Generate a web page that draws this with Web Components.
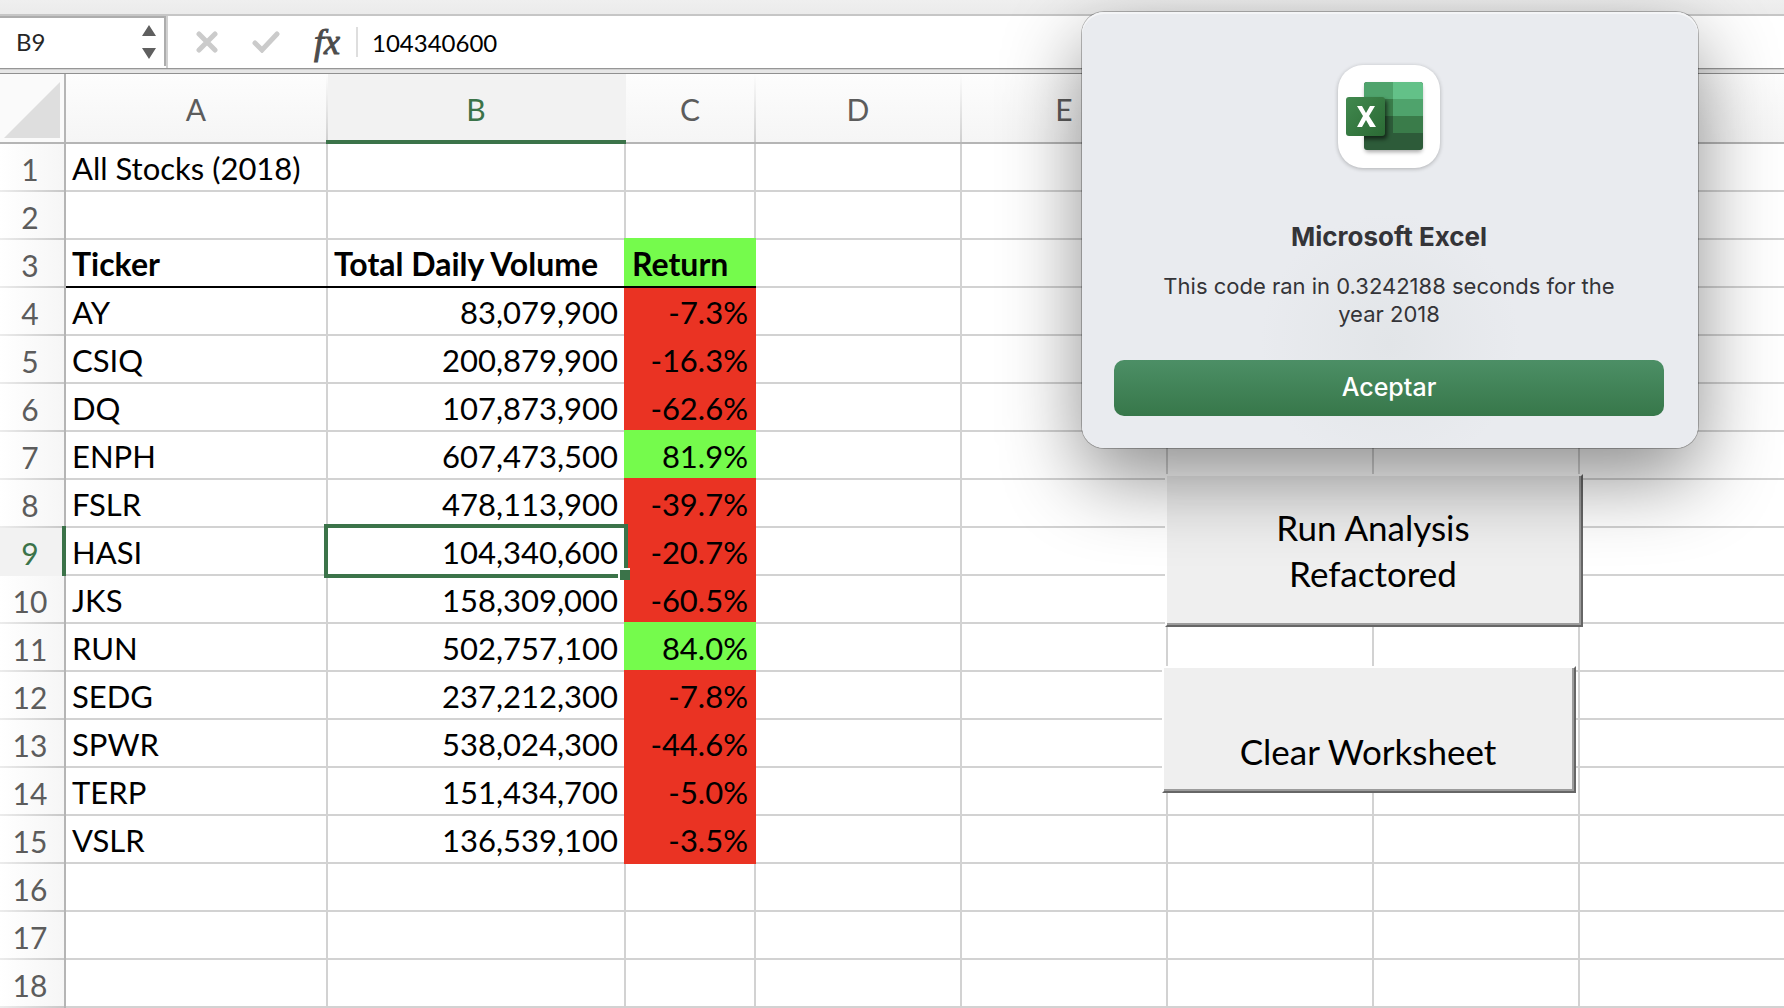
<!DOCTYPE html>
<html lang="es">
<head>
<meta charset="utf-8">
<title>Microsoft Excel</title>
<style>
  body {
    margin: 0;
    background: #fff;
    font-family: Lato, "Liberation Sans", sans-serif;
    overflow: hidden;
  }
</style>
</head>
<body>
<excel-window>
  <formula-bar slot="bar" cell="B9" formula="104340600"></formula-bar>
  <sheet-grid slot="sheet">
    <sheet-button class="run">Run Analysis<br>Refactored</sheet-button>
    <sheet-button class="clear" low>Clear Worksheet</sheet-button>
  </sheet-grid>
  <alert-dialog slot="dialog" action="Aceptar">
    <excel-icon slot="icon"></excel-icon>
    <span slot="title">Microsoft Excel</span>
    <span slot="message">This code ran in 0.3242188 seconds for the year 2018</span>
  </alert-dialog>
</excel-window>

<script>
const define = (name, html, setup) => {
  const template = document.createElement('template');
  template.innerHTML = html;
  customElements.define(name, class extends HTMLElement {
    connectedCallback() {
      if (this.shadowRoot) return;
      const root = this.attachShadow({ mode: 'open' });
      root.append(template.content.cloneNode(true));
      if (setup) setup(this, root);
    }
  });
};

/* Window frame: ribbon edge, formula bar, worksheet, and the modal above them */
define('excel-window', `
<style>
  :host { display: flex; flex-direction: column; position: relative; height: 100vh; overflow: hidden; }
  .ribbon { height: 14px; flex: none; background: linear-gradient(#efefef, #ebebeb); border-bottom: 2px solid #c6c6c6; }
  ::slotted([slot=sheet]) { flex: 1; }
  ::slotted([slot=dialog]) { position: absolute; top: 12px; right: 86px; z-index: 10; }
</style>
<div class="ribbon"></div>
<slot name="bar"></slot>
<slot name="sheet"></slot>
<slot name="dialog"></slot>
`);

define('formula-bar', `
<style>
  :host { display: block; flex: none; background: #fff; }
  .bar { display: flex; align-items: center; height: 52px; }
  .name { display: flex; align-items: center; box-sizing: border-box; width: 166px; height: 50px; align-self: flex-start;
    padding: 0 8px 0 16px; border-top: 2px solid #adadad; border-right: 2px solid #adadad; background: #fff; }
  .edge { width: 2px; align-self: stretch; background: #d0d0d0; }
  input { font: 24px/30px Lato, sans-serif; border: 0; padding: 0; margin: 0; background: none; outline: 0; min-width: 0; flex: 1; color: #000; }
  .name input { color: #262626; }
  .formula { padding-top: 2px; }
  button { border: 0; padding: 0; margin: 0; background: none; display: block; flex: none; }
  svg { display: block; }
  .cancel { margin-left: 28px; }
  .enter { margin-left: 34px; }
  .fx { margin-left: 32px; color: #4c4c4c; font: italic 400 36px/38px "Liberation Serif", serif; -webkit-text-stroke: 1px #4c4c4c; width: 30px; height: 38px; }
  .rule { width: 2px; height: 30px; margin: 0 14px; background: #dedede; }
  .split { height: 4px; border-top: 1px solid #969696; border-bottom: 1px solid #909090; background: #e6e6e6; box-shadow: inset 0 1px #d0d0d0; }
</style>
<div class="bar">
  <div class="name">
    <input class="ref" aria-label="Name box">
    <button aria-label="Step cell">
      <svg width="14" height="34" viewBox="0 0 14 34" fill="#5f5f5f"><path d="M7 0l7 11H0zM0 23h14l-7 11z"/></svg>
    </button>
  </div>
  <div class="edge"></div>
  <button class="cancel" aria-label="Cancel">
    <svg width="22" height="22" viewBox="0 0 22 22" stroke="#cbcbcb" stroke-width="5" stroke-linecap="round"><path d="M3 3l16 16M19 3L3 19"/></svg>
  </button>
  <button class="enter" aria-label="Enter">
    <svg width="28" height="22" viewBox="0 0 28 22" fill="none" stroke="#cbcbcb" stroke-width="5" stroke-linecap="round"><path d="M3 12l7 7L25 3"/></svg>
  </button>
  <button class="fx" aria-label="Insert function">fx</button>
  <div class="rule"></div>
  <input class="formula" aria-label="Formula">
</div>
<div class="split"></div>
`, (host, root) => {
  root.querySelector('.ref').value = host.getAttribute('cell');
  root.querySelector('.formula').value = host.getAttribute('formula');
});

define('sheet-grid', `
<style>
  :host { display: block; position: relative; overflow: hidden; background: #fff; }
  table { width: 100%; table-layout: fixed; border-collapse: separate; border-spacing: 0; font-size: 31px; line-height: 36px; color: #000; }
  col.h { width: 66px; } col.a { width: 262px; } col.b { width: 298px; } col.c { width: 130px; } col.n { width: 206px; }
  th, td { box-sizing: border-box; white-space: nowrap; }
  thead th { height: 70px; padding: 2px 2px 0 0; font-size: 30px; font-weight: 400; color: #5c5c5c; border-bottom: 2px solid #b5b5b5;
    background: linear-gradient(#fdfdfd, #cfcfcf) right / 2px 100% no-repeat, linear-gradient(#fdfdfd, #f5f5f5); }
  thead th:first-child { padding: 0 4px 4px; vertical-align: bottom; background: #fafafa; border-right: 2px solid #b5b5b5; }
  thead th:last-child { background: linear-gradient(#fdfdfd, #f5f5f5); }
  thead svg { display: block; }
  .on { position: relative; }
  .on::after { content: ""; position: absolute; background: #3b7349; }
  thead th.on { color: #3b7349; background: #f2f2f2; }
  thead .on::after { left: -2px; right: 0; bottom: -2px; height: 4px; }
  tbody th { height: 48px; padding: 1px 4px 0 0; font-size: 30px; font-weight: 400; color: #5c5c5c; border-right: 2px solid #b5b5b5;
    background: linear-gradient(to right, #ececec, #c8c8c8) bottom / 100% 2px no-repeat, linear-gradient(to right, #fff, #f6f6f6); }
  tbody th.on { color: #3b7349; background: #f2f2f2; }
  tbody .on::after { top: -2px; bottom: 0; right: -2px; width: 4px; }
  td { height: 48px; padding: 2px 6px 0; border-right: 2px solid #d2d2d2; border-bottom: 2px solid #d2d2d2; }
  th:last-child, td:last-child { border-right: 0; }
  .num { text-align: right; }
  .head td { font-weight: 700; font-size: 32px; }
  .head td:nth-child(-n+4) { position: relative; }
  .head td:nth-child(-n+4)::after { content: ""; position: absolute; left: 0; right: -2px; bottom: -2px; height: 2px; background: #000; }
  .up, .down { position: relative; border-color: var(--fill); background: var(--fill);
    box-shadow: -2px 0 var(--fill), 0 -2px var(--fill), -2px -2px var(--fill); }
  .up { --fill: #75fb4c; }
  .down { --fill: #ea3323; }
  .head .up { box-shadow: -2px -2px var(--fill), 0 -2px var(--fill); }
  .first .down { box-shadow: -2px 0 var(--fill); }
  .sel { position: relative; z-index: 1; }
  .sel::before { content: ""; position: absolute; inset: -4px; border: 4px solid #3b7349; }
  .sel::after { content: ""; position: absolute; right: -6px; bottom: -6px; width: 10px; height: 10px; background: #3b7349; border: solid #fff; border-width: 2px 0 0 2px; }
  ::slotted(sheet-button) { position: absolute; z-index: 2; }
  ::slotted(.run) { left: 1165px; top: 400px; width: 418px; height: 153px; }
  ::slotted(.clear) { left: 1162px; top: 592px; width: 414px; height: 127px; }
</style>
<table>
  <colgroup><col class="h"><col class="a"><col class="b"><col class="c"><col class="n"><col class="n"><col class="n"><col class="n"><col></colgroup>
  <thead><tr>
    <th><svg width="56" height="56" viewBox="0 0 56 56"><path d="M56 0v56H0z" fill="#dedede"/></svg></th>
    <th>A</th><th class="on">B</th><th>C</th><th>D</th><th>E</th><th>F</th><th>G</th><th>H</th>
  </tr></thead>
  <tbody></tbody>
</table>
<slot></slot>
`, (host, root) => {
  const rows = {
    1: ['All Stocks (2018)'],
    3: ['Ticker', 'Total Daily Volume', 'Return'],
    4: ['AY', '83,079,900', '-7.3%'],
    5: ['CSIQ', '200,879,900', '-16.3%'],
    6: ['DQ', '107,873,900', '-62.6%'],
    7: ['ENPH', '607,473,500', '81.9%'],
    8: ['FSLR', '478,113,900', '-39.7%'],
    9: ['HASI', '104,340,600', '-20.7%'],
    10: ['JKS', '158,309,000', '-60.5%'],
    11: ['RUN', '502,757,100', '84.0%'],
    12: ['SEDG', '237,212,300', '-7.8%'],
    13: ['SPWR', '538,024,300', '-44.6%'],
    14: ['TERP', '151,434,700', '-5.0%'],
    15: ['VSLR', '136,539,100', '-3.5%']
  };
  const body = root.querySelector('tbody');
  for (let r = 1; r <= 18; r++) {
    const tr = body.insertRow();
    if (r === 3) tr.className = 'head';
    if (r === 4) tr.className = 'first';
    const th = document.createElement('th');
    th.scope = 'row';
    th.textContent = r;
    if (r === 9) th.className = 'on';
    tr.append(th);
    for (let c = 0; c < 8; c++) {
      const td = tr.insertCell();
      const text = (rows[r] || [])[c];
      if (text === undefined) continue;
      td.textContent = text;
      if (r > 3 && c > 0) td.classList.add('num');
      if (c === 2) td.classList.add(text[0] === '-' ? 'down' : 'up');
      if (r === 9 && c === 1) td.classList.add('sel');
    }
  }
});

/* Bevelled form control placed on the worksheet */
define('sheet-button', `
<style>
  :host { display: block; }
  button { width: 100%; height: 100%; box-sizing: border-box; margin: 0; padding: 0 2px 2px 0; border: 2px solid; border-color: #fff #666 #666 #fff;
    background: #efefef; box-shadow: inset -2px -2px #9c9c9c; font: 35px/46px Lato, sans-serif; color: #000; }
  :host([low]) button { padding-top: 44px; }
</style>
<button><slot></slot></button>
`);

define('alert-dialog', `
<style>
  :host { display: flex; flex-direction: column; align-items: center; box-sizing: border-box; width: 616px; padding: 53px 34px 32px 32px;
    border-radius: 22px; background: radial-gradient(circle at 50% 76%, #e2e5e8, #e9ebef 130px); color: #343438; font-family: Inter, sans-serif; text-align: center;
    box-shadow: inset 0 2px #f4f5f7, 0 0 0 1px rgba(0,0,0,.25), 0 30px 80px rgba(0,0,0,.45); }
  h1 { margin: 52px 0 0; font-size: 26px; line-height: 32px; font-weight: 700; }
  p { margin: 19px 0 0; width: 480px; font-size: 22px; line-height: 28px; }
  button { align-self: stretch; height: 56px; margin: 32px 0 0; padding: 0 0 2px; border: 0; border-radius: 10px; color: #fff;
    background: linear-gradient(#4c8f66, #37774a); font: 500 25px/32px Inter, sans-serif; }
</style>
<slot name="icon"></slot>
<h1><slot name="title"></slot></h1>
<p><slot name="message"></slot></p>
<button></button>
`, (host, root) => {
  host.setAttribute('role', 'alertdialog');
  root.querySelector('button').textContent = host.getAttribute('action');
});

define('excel-icon', `
<style>
  :host { display: block; }
  svg { display: block; overflow: visible; }
</style>
<svg width="102" height="104" viewBox="0 0 102 104" aria-hidden="true">
  <defs>
    <linearGradient id="tile" x1="0" y1="0" x2="1" y2="1"><stop offset="0" stop-color="#41894f"/><stop offset="1" stop-color="#2b6a34"/></linearGradient>
    <filter id="soft" x="-30%" y="-30%" width="160%" height="160%"><feGaussianBlur stdDeviation="2"/></filter>
    <clipPath id="book"><rect x="26" y="17" width="59" height="68" rx="3"/></clipPath>
  </defs>
  <rect x="0" y="1" width="102" height="103" rx="25" fill="#000" opacity=".25" filter="url(#soft)"/>
  <rect width="102" height="103" rx="25" fill="#fff"/>
  <rect x="27" y="20" width="57" height="67" rx="3" opacity=".35" filter="url(#soft)"/>
  <g clip-path="url(#book)">
    <rect x="26" y="17" width="59" height="68" fill="#2d5b39"/>
    <rect x="26" y="17" width="30" height="18" fill="#4fa36c"/>
    <rect x="55" y="17" width="30" height="18" fill="#63c188"/>
    <rect x="26" y="34" width="30" height="17" fill="#3a7c4a"/>
    <rect x="55" y="34" width="30" height="17" fill="#4fa36c"/>
    <rect x="55" y="51" width="30" height="17" fill="#3a7c4a"/>
    <rect x="10" y="35" width="39" height="39" rx="3" opacity=".6" filter="url(#soft)"/>
  </g>
  <rect x="8" y="32" width="39" height="39" rx="3" fill="url(#tile)"/>
  <path d="M19 41h5l4 7 4-7h5l-6 10 7 11h-6l-4-7-4 7h-5l6-11z" fill="#fff"/>
</svg>
`);
</script>
</body>
</html>
